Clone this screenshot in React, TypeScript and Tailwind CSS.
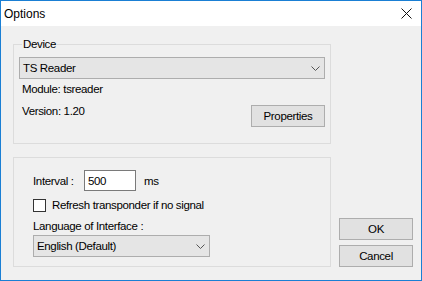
const font = { fontFamily: '"Liberation Sans", Arial, sans-serif' };

function Button({ label }: { label: string }) {
  return (
    <div className="w-[74px] h-[22px] flex items-center justify-center bg-[#e1e1e1] border border-[#adadad] text-black">
      {label}
    </div>
  );
}

function Chevron() {
  return (
    <svg width="9" height="5" viewBox="0 0 9 5" className="text-[#555]">
      <path d="M0.5 0.5 L4.5 4.5 L8.5 0.5" fill="none" stroke="currentColor" strokeWidth="1" />
    </svg>
  );
}

function Combo({ value, className }: { value: string; className: string }) {
  return (
    <div className={`h-[22px] flex items-center justify-between bg-[#e5e5e5] border border-[#adadad] pl-[3px] pr-[4px] text-black ${className}`}>
      <span>{value}</span>
      <Chevron />
    </div>
  );
}

export default function App() {
  return (
    <div className="w-[422px] h-[281px] border border-[#1a7fd4] bg-[#f0f0f0] flex flex-col text-[11.5px] tracking-[-0.35px] leading-[16px] text-black" style={font}>
      {/* title bar */}
      <div className="h-[25px] bg-white flex items-center justify-between pl-[3px] pr-[9px] text-[12px] tracking-normal">
        <span>Options</span>
        <svg width="11" height="11" viewBox="0 0 11 11">
          <path d="M0.5 0.5 L10.5 10.5 M10.5 0.5 L0.5 10.5" stroke="#111" strokeWidth="1" />
        </svg>
      </div>

      <div className="flex pl-[12px] pt-[18px]">
        {/* left column */}
        <div className="w-[318px] flex flex-col gap-[13px]">
          <div className="relative h-[100px] border border-[#dcdcdc] px-[5px] pt-[12px] flex flex-col">
            <span className="absolute left-[8px] top-[-9px] bg-[#f0f0f0] px-[1px]">Device</span>
            <Combo value="TS Reader" className="w-full" />
            <div className="mt-[2px] pl-[3px]">Module: tsreader</div>
            <div className="mt-[6px] pl-[3px] flex justify-between items-start">
              <span>Version: 1.20</span>
              <div className="mt-[2px]">
                <Button label="Properties" />
              </div>
            </div>
          </div>

          <div className="h-[110px] border border-[#dcdcdc] pl-[19px] pt-[12px] flex flex-col">
            <div className="flex items-center">
              <span className="w-[51px]">Interval :</span>
              <div className="w-[52px] h-[21px] bg-white border border-[#7a7a7a] pl-[3px] flex items-center">500</div>
              <span className="ml-[8px]">ms</span>
            </div>
            <div className="mt-[6px] flex items-center">
              <div className="w-[13px] h-[13px] bg-white border border-[#333]" />
              <span className="ml-[6px]">Refresh transponder if no signal</span>
            </div>
            <div className="mt-[5px]">Language of Interface :</div>
            <Combo value="English (Default)" className="w-[177px] mt-[1px]" />
          </div>
        </div>

        {/* right column */}
        <div className="ml-[8px] flex flex-col justify-end gap-[5px]">
          <Button label="OK" />
          <Button label="Cancel" />
        </div>
      </div>
    </div>
  );
}
